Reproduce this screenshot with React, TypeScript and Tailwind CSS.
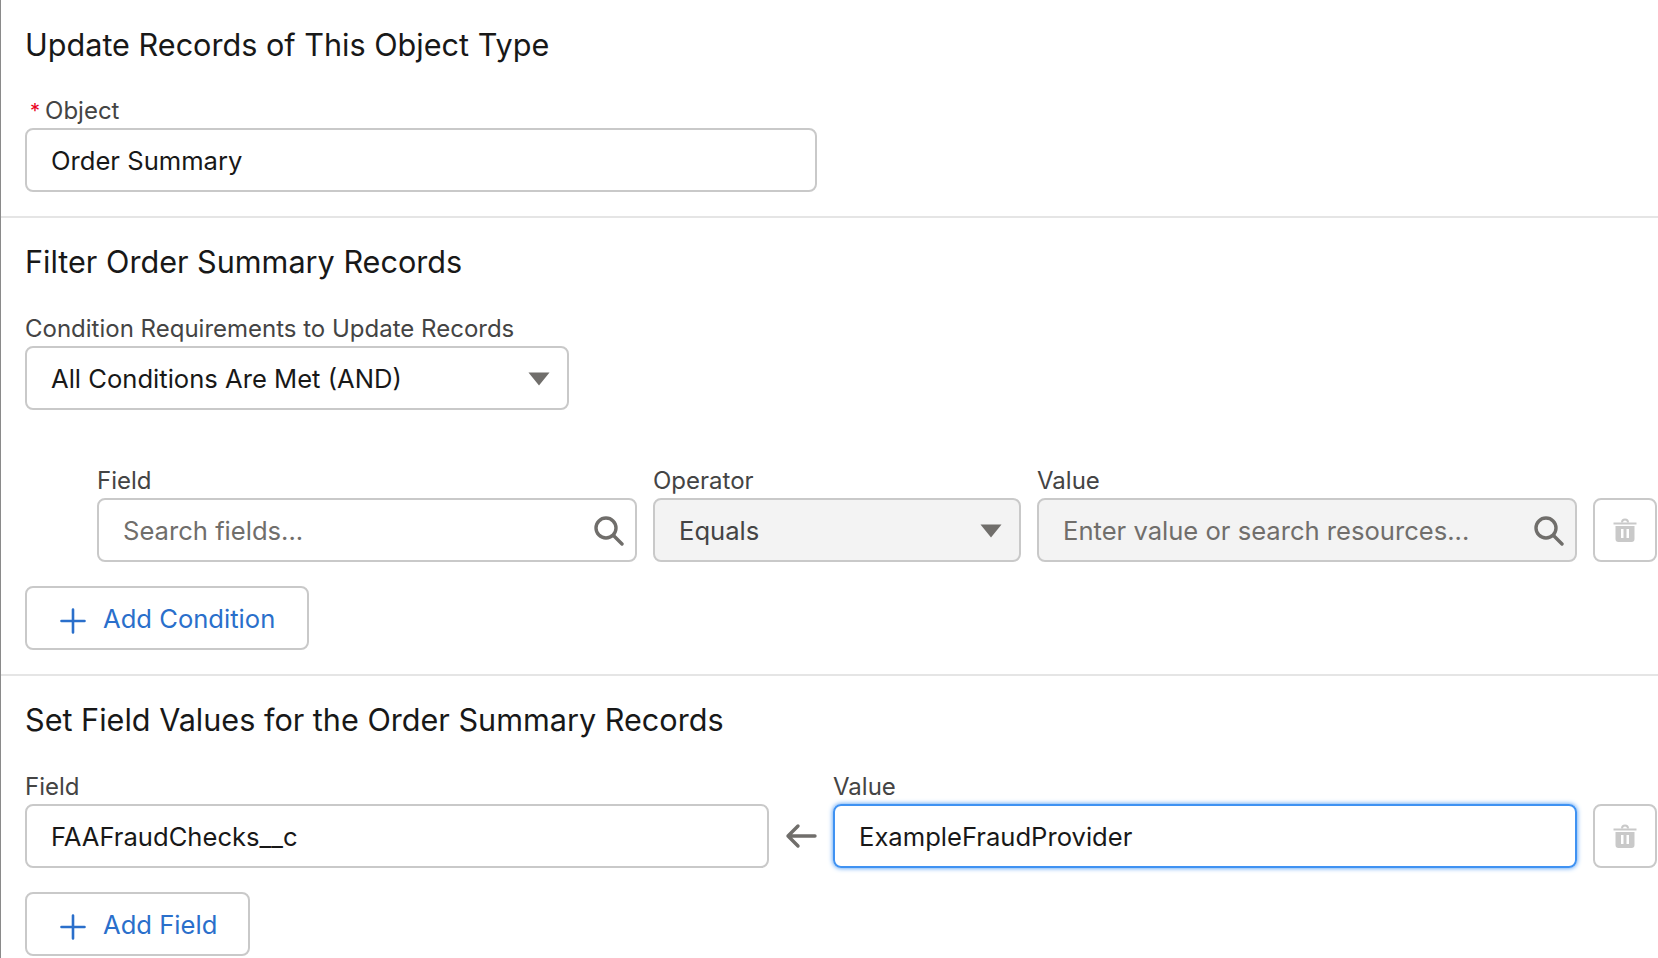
const FONT = "font-['Inter','Noto_Sans',sans-serif]";

function SearchIcon() {
  return (
    <svg width="30" height="30" viewBox="0 0 30 30" fill="none" stroke="#706e6b" strokeWidth="3.4" strokeLinecap="round">
      <circle cx="12" cy="12" r="10" />
      <path d="M19.5 19.5l8.5 8.5" />
    </svg>
  );
}

function Caret() {
  return (
    <svg width="22" height="14" viewBox="0 0 22 14" fill="#706e6b">
      <path d="M0.5 0.5h21L11 13.5z" />
    </svg>
  );
}

function PlusIcon() {
  return (
    <svg width="26" height="26" viewBox="0 0 26 26" fill="none" stroke="#2a6fcb" strokeWidth="2.6" strokeLinecap="round">
      <path d="M13 1.5v23M1.5 13h23" />
    </svg>
  );
}

function TrashIcon() {
  return (
    <svg width="24" height="26" viewBox="0 0 24 26" fill="#c9c9c9">
      <path d="M0.5 5.5h23v2h-23z" />
      <path d="M8 5.5a4 4 0 0 1 8 0h-2a2 2 0 0 0-4 0z" />
      <path fillRule="evenodd" d="M2.5 9h19v13a3 3 0 0 1-3 3h-13a3 3 0 0 1-3-3zM8 12v9h2.5v-9zM13.5 12v9H16v-9z" />
    </svg>
  );
}

function Label({ children }: { children: React.ReactNode }) {
  return <p className="h-6 text-[24px] leading-6 text-[#444444]">{children}</p>;
}

function Box({ className, children }: { className: string; children: React.ReactNode }) {
  return (
    <div className={`flex items-center rounded-lg border-2 pl-[24px] pt-[2px] text-[25.6px] ${className}`}>
      {children}
    </div>
  );
}

function TrashButton() {
  return (
    <div className="flex h-[64px] w-[64px] shrink-0 items-center justify-center rounded-lg border-2 border-[#c9c9c9] bg-white">
      <TrashIcon />
    </div>
  );
}

function AddButton({ label, className }: { label: string; className: string }) {
  return (
    <div className={`flex items-center rounded-lg border-2 border-[#c9c9c9] pl-[33px] pt-[2px] text-[25.6px] text-[#2a6fcb] ${className}`}>
      <span className="mt-[4px]">
        <PlusIcon />
      </span>
      <span className="ml-[17px]">{label}</span>
    </div>
  );
}

function Heading({ children }: { children: React.ReactNode }) {
  return <h2 className="h-9 text-[30.6px] leading-9 text-[#181818]">{children}</h2>;
}

export default function App() {
  return (
    <div className={`flex h-[958px] w-[1658px] flex-col overflow-hidden border-l border-[#8a8a8a] bg-white ${FONT}`}>
      {/* Object type */}
      <section className="pl-[24px] pt-[27px]">
        <Heading>Update Records of This Object Type</Heading>
        <div className="mt-9 flex h-6 items-center text-[24px] leading-6 text-[#444444]">
          <span className="ml-[5px] mr-[5px] text-[20px] text-[#ea001e]">*</span>
          Object
        </div>
        <Box className="mt-[5px] h-[64px] w-[792px] border-[#c9c9c9] text-[#181818]">Order Summary</Box>
      </section>
      <div className="mt-6 h-0.5 shrink-0 bg-[#e5e5e5]" />

      {/* Filter */}
      <section className="pl-[24px] pt-[26px]">
        <Heading>Filter Order Summary Records</Heading>
        <div className="mt-[37px]">
          <Label>Condition Requirements to Update Records</Label>
        </div>
        <Box className="mt-[5px] h-[64px] w-[544px] justify-between border-[#c9c9c9] pr-[17px] text-[#181818]">
          All Conditions Are Met (AND)
          <Caret />
        </Box>
        <div className="ml-[72px] mt-[59px] flex items-end gap-4">
          <div className="w-[540px]">
            <Label>Field</Label>
            <Box className="mt-[5px] h-[64px] justify-between border-[#c9c9c9] pr-[11px] text-[#706e6b]">
              Search fields...
              <SearchIcon />
            </Box>
          </div>
          <div className="w-[368px]">
            <Label>Operator</Label>
            <Box className="mt-[5px] h-[64px] justify-between border-[#c9c9c9] bg-[#f3f3f3] pr-[17px] text-[#444444]">
              Equals
              <Caret />
            </Box>
          </div>
          <div className="w-[540px]">
            <Label>Value</Label>
            <Box className="mt-[5px] h-[64px] justify-between border-[#c9c9c9] bg-[#f3f3f3] pr-[11px] text-[#706e6b]">
              Enter value or search resources...
              <SearchIcon />
            </Box>
          </div>
          <TrashButton />
        </div>
        <AddButton label="Add Condition" className="mt-6 h-[64px] w-[284px]" />
      </section>
      <div className="mt-6 h-0.5 shrink-0 bg-[#e5e5e5]" />

      {/* Field values */}
      <section className="pl-[24px] pt-[26px]">
        <Heading>Set Field Values for the Order Summary Records</Heading>
        <div className="mt-[37px] flex items-end">
          <div className="w-[744px]">
            <Label>Field</Label>
            <Box className="mt-[5px] h-[64px] border-[#c9c9c9] text-[#181818]">FAAFraudChecks__c</Box>
          </div>
          <div className="flex h-[64px] w-[64px] items-center justify-center">
            <svg width="32" height="26" viewBox="0 0 32 26" fill="none" stroke="#706e6b" strokeWidth="3.4" strokeLinecap="round" strokeLinejoin="round">
              <path d="M30 13H3M13 3L3 13l10 10" />
            </svg>
          </div>
          <div className="w-[744px]">
            <Label>Value</Label>
            <Box className="mt-[5px] h-[64px] border-[#3f92f2] text-[#181818] shadow-[0_0_5px_#3f92f2]">ExampleFraudProvider</Box>
          </div>
          <div className="ml-4">
            <TrashButton />
          </div>
        </div>
        <AddButton label="Add Field" className="mt-6 h-[64px] w-[225px]" />
      </section>
    </div>
  );
}
